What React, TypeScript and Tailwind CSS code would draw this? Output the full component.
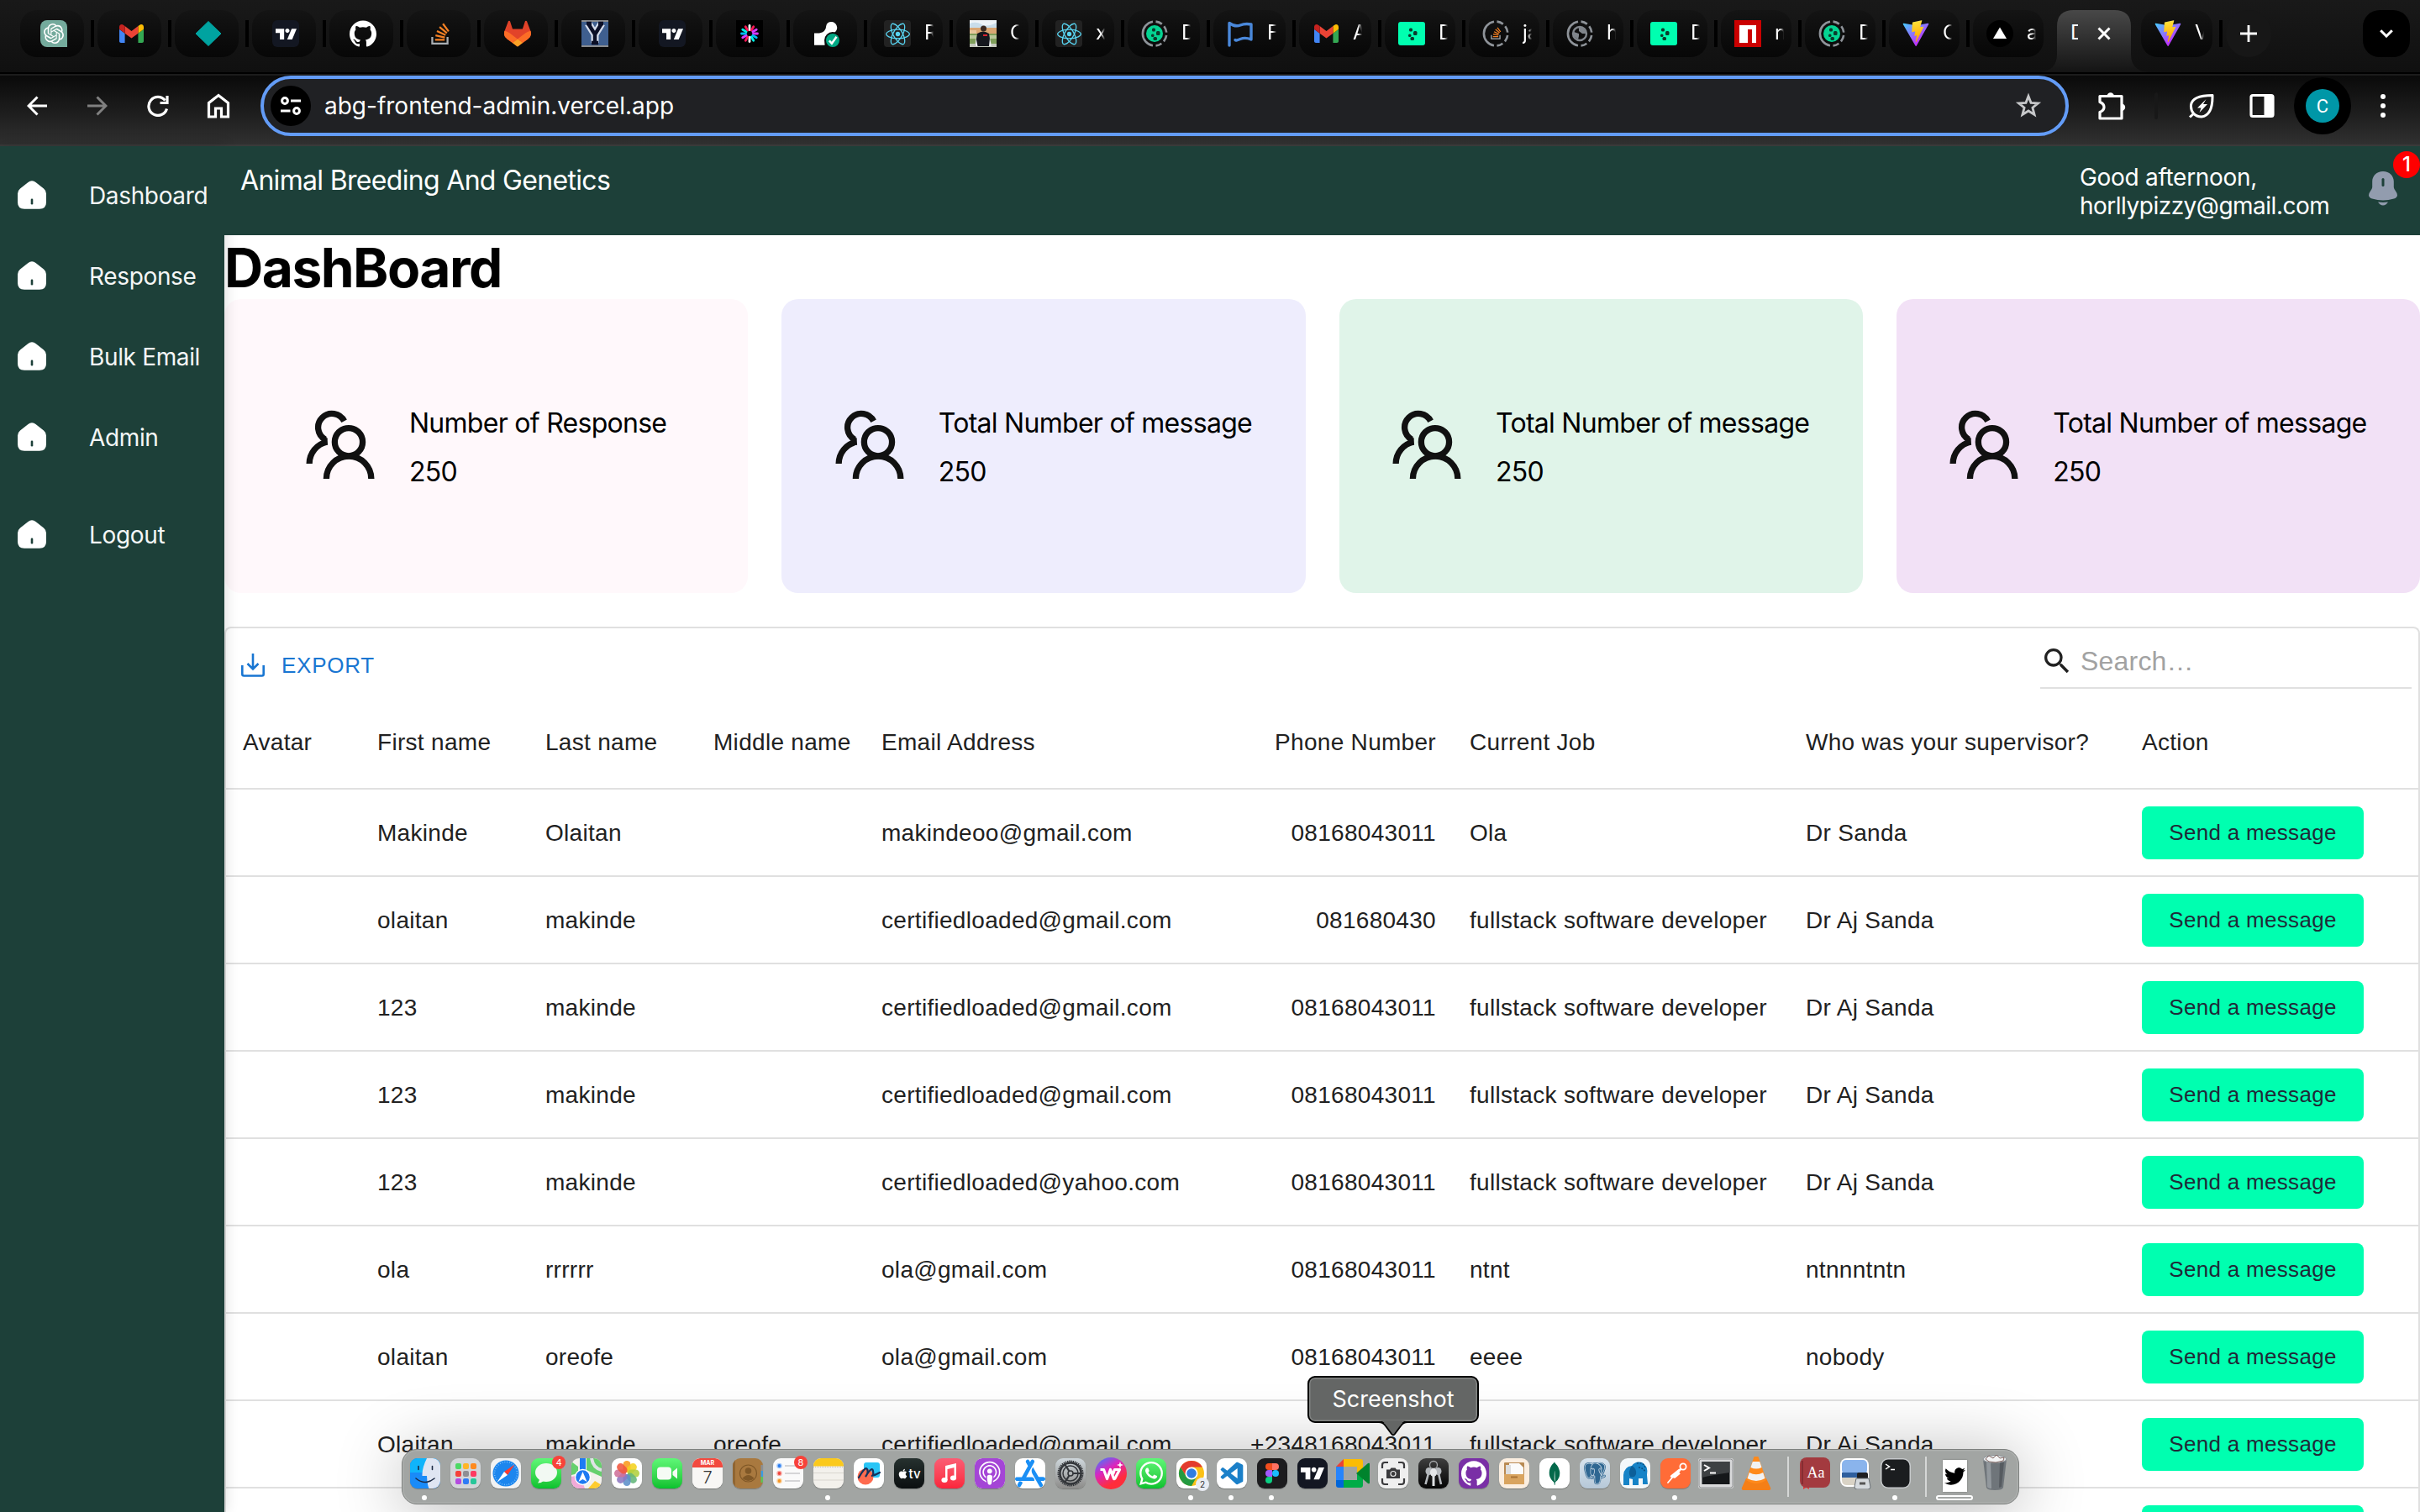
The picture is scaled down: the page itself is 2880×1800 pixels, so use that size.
import React from "react";
import type { ReactNode } from "react";
import { SiOpenai, SiTradingview, SiGithub, SiReact, SiMongodb, SiAppstore, SiWhatsapp, SiApplepodcasts } from "react-icons/si";
import { FaTwitter, FaApple } from "react-icons/fa";
import { MdSearch } from "react-icons/md";
import { BiLogoVisualStudio, BiLogoPostgresql } from "react-icons/bi";

/* ---------- favicons ---------- */

const Gmail = () => (
  <svg viewBox="52 42 88 66" className="h-[22px] w-[29px]">
    <path fill="#4285f4" d="M58 108h14V74L52 59v43c0 3.32 2.69 6 6 6" />
    <path fill="#34a853" d="M120 108h14c3.32 0 6-2.69 6-6V59l-20 15" />
    <path fill="#fbbc04" d="M120 48v26l20-15v-8c0-7.42-8.47-11.65-14.4-7.2" />
    <path fill="#ea4335" d="M72 74V48l24 18 24-18v26L96 92" />
    <path fill="#c5221f" d="M52 51v8l20 15V48l-5.6-4.2c-5.94-4.45-14.4-.22-14.4 7.2" />
  </svg>
);

const StackShape = () => (
  <>
    <path d="M84.4 93.8V70.6h7.7v30.9H22.6V70.6h7.7v23.2z" fill="#a9aeb3" />
    <path
      d="M38.8 68.4l37.8 7.9 1.6-7.6-37.8-7.9-1.6 7.6zm5-18l35 16.3 3.2-7-35-16.4-3.2 7.1zm9.7-17.2l29.7 24.7 4.9-5.9-29.7-24.7-4.9 5.9zm19.2-18.3l-6.2 4.6 23 31 6.2-4.6-23-31zM38 86h38.6v-7.7H38V86z"
      fill="#f48024"
    />
  </>
);

const StackOverflow = () => (
  <svg viewBox="8 6 102 102" className="size-[30px]">
    <StackShape />
  </svg>
);

const GitLab = () => (
  <svg viewBox="0 0 25 24" className="size-8">
    <path fill="#E24329" d="m24.507 9.5-.034-.09L21.082.562a.896.896 0 0 0-1.694.091l-2.29 7.01H7.825L5.535.653a.898.898 0 0 0-1.694-.09L.451 9.411.416 9.5a6.297 6.297 0 0 0 2.09 7.278l.012.01.03.022 5.16 3.867 2.56 1.935 1.554 1.176a1.051 1.051 0 0 0 1.268 0l1.555-1.176 2.56-1.935 5.197-3.89.014-.01A6.297 6.297 0 0 0 24.507 9.5Z" />
    <path fill="#FC6D26" d="m24.507 9.5-.034-.09a11.44 11.44 0 0 0-4.56 2.051l-7.447 5.632 4.742 3.584 5.197-3.89.014-.01A6.297 6.297 0 0 0 24.507 9.5Z" />
    <path fill="#FCA326" d="m7.707 20.677 2.56 1.935 1.555 1.176a1.051 1.051 0 0 0 1.268 0l1.555-1.176 2.56-1.935-4.743-3.584-4.755 3.584Z" />
    <path fill="#FC6D26" d="M5.01 11.461a11.43 11.43 0 0 0-4.56-2.05L.416 9.5a6.297 6.297 0 0 0 2.09 7.278l.012.01.03.022 5.16 3.867 4.745-3.584-7.444-5.632Z" />
  </svg>
);

const TradingTile = () => (
  <span className="flex size-8 items-center justify-center rounded-md bg-[#131722]">
    <SiTradingview className="size-[25px] text-white" />
  </span>
);

const YTile = () => (
  <svg viewBox="0 0 32 32" className="size-8">
    <rect width="32" height="32" fill="#8b8d90" />
    <rect y="2" width="32" height="28" fill="#3f5f8f" />
    <path d="M8 4l8 13 8-13M16 16v11" fill="none" stroke="#d4dceb" strokeWidth="9" />
    <path d="M6 4h6M20 4h6M8 4l8 13 8-13M16 16v10M12 27h8" fill="none" stroke="#0b0f26" strokeWidth="4.4" />
  </svg>
);

const BURST = [
  { a: 0, c: "#ffffff" },
  { a: 30, c: "#ff1654" },
  { a: 60, c: "#d63aff" },
  { a: 90, c: "#d63aff" },
  { a: 120, c: "#00b9f1" },
  { a: 150, c: "#00f2e6" },
  { a: 180, c: "#ffffff" },
  { a: 210, c: "#ff1654" },
  { a: 240, c: "#d63aff" },
  { a: 270, c: "#00b9f1" },
  { a: 300, c: "#00f2e6" },
  { a: 330, c: "#ff1654" },
];

const Burst = () => (
  <svg viewBox="0 0 32 32" className="size-8 bg-black">
    {BURST.map((b) => (
      <path key={b.a} d="M16 11.5V6.5" stroke={b.c} strokeWidth="2.8" strokeLinecap="round" transform={`rotate(${b.a} 16 16)`} />
    ))}
  </svg>
);

const Verified = () => (
  <svg viewBox="0 0 32 32" className="size-8">
    <path d="M1 15.500Q4 15.500 7 15.500Q15 14 15.200 7Q16 2 21.500 2A7 7 0 0 1 26.500 13.500Q24 16 17.500 18Q13 22 13.500 29.800H1z" fill="#fff" />
    <circle cx="23" cy="24" r="10" fill="#0b0b0b" />
    <circle cx="23" cy="24" r="8" fill="#00a884" />
    <path d="M18.800 24.300l3.100 3.400 5.600-8" fill="none" stroke="#fff" strokeWidth="2.500" />
  </svg>
);

const ReactTile = () => (
  <span className="flex size-8 items-center justify-center rounded bg-[#222222]">
    <SiReact className="size-[29px] text-[#58d3f0]" />
  </span>
);

const Photo = () => (
  <svg viewBox="0 0 32 32" className="size-8">
    <rect width="32" height="32" fill="#c9ddea" />
    <path d="M0 4Q8 1 14 5T32 3V0H0z" fill="#eef4f8" />
    <rect y="9" width="32" height="8" fill="#d9a673" />
    <rect y="12" width="8" height="4" fill="#e7c69c" />
    <rect y="16" width="32" height="16" fill="#7f9e5a" />
    <rect y="18" width="32" height="4" fill="#b9c79a" />
    <rect y="28" width="32" height="4" fill="#c3c8bb" />
    <path d="M9 16Q16 11 23 16L25.500 31H6.500z" fill="#15171d" />
    <circle cx="16.500" cy="10" r="3.500" fill="#3a2a22" />
    <path d="M7.500 21l-1 10h3zM24 21l2 10h-3z" fill="#eceef0" />
    <path d="M16 17h5v2h-5z" fill="#d8232f" />
  </svg>
);

const Dots = () => (
  <g fill="#0b3b2c">
    <rect x="13" y="9.500" width="4" height="4" rx="1.500" />
    <rect x="18" y="13" width="4.500" height="5" rx="1.500" />
    <rect x="12" y="16.500" width="3.500" height="3.500" rx="1.500" />
    <rect x="14.500" y="20" width="4.500" height="4" rx="1.500" />
  </g>
);

const GreenTile = () => (
  <svg viewBox="0 0 32 32" className="size-8">
    <rect y="2" width="32" height="28" rx="3" fill="#00ffb0" />
    <Dots />
  </svg>
);

const Ring = ({ children }: { children: ReactNode }) => (
  <svg viewBox="0 0 32 32" className="size-8">
    <path d="M14 1.700A14.500 14.500 0 0 0 14 30.300" fill="none" stroke="#8e9399" strokeWidth="2.600" />
    <path d="M17.500 1.600A14.500 14.500 0 0 1 17.500 30.400" fill="none" stroke="#8e9399" strokeWidth="2.600" strokeDasharray="8 3.500" />
    {children}
  </svg>
);

const RingGreen = () => (
  <Ring>
    <circle cx="16" cy="16" r="10" fill="#04d492" />
    <Dots />
  </Ring>
);

const RingStack = () => (
  <Ring>
    <g transform="translate(6.500 6) scale(.165)">
      <StackShape />
    </g>
  </Ring>
);

const RingGlobe = () => (
  <Ring>
    <circle cx="16" cy="16" r="8" fill="none" stroke="#80858b" strokeWidth="2.400" />
    <path d="M9 14l6 2v3l-1 4-5-4zM15 9h4l4 4v3h-4l-4-3z" fill="#80858b" />
  </Ring>
);

const Flag = () => (
  <svg viewBox="0 0 32 32" className="size-8">
    <path d="M3 30V3.500Q10 8.500 16 6T29 5V23Q22 20 16 22.500T10 23.500" fill="none" stroke="#4a88da" strokeWidth="3.400" strokeLinejoin="round" strokeLinecap="round" />
  </svg>
);

const Npm = () => (
  <svg viewBox="0 0 32 32" className="size-8">
    <rect width="32" height="32" fill="#cb0000" />
    <path d="M6 6h20v21h-5V11h-5v16H6z" fill="#fff" />
  </svg>
);

const Vite = ({ id }: { id: string }) => (
  <svg viewBox="0 0 410 404" className="size-8">
    <defs>
      <linearGradient id={`${id}a`} x1="6" y1="33" x2="235" y2="344" gradientUnits="userSpaceOnUse">
        <stop stopColor="#41D1FF" />
        <stop offset="1" stopColor="#BD34FE" />
      </linearGradient>
      <linearGradient id={`${id}b`} x1="194" y1="8" x2="236" y2="293" gradientUnits="userSpaceOnUse">
        <stop stopColor="#FFEA83" />
        <stop offset=".083" stopColor="#FFDD35" />
        <stop offset="1" stopColor="#FFA800" />
      </linearGradient>
    </defs>
    <path fill={`url(#${id}a)`} d="M399.641 59.5246L215.643 388.545C211.844 395.338 202.084 395.378 198.228 388.618L10.5817 59.5563C6.38087 52.1896 12.6802 43.2665 21.0281 44.7586L205.223 77.6824C206.398 77.8924 207.601 77.8904 208.776 77.6763L389.119 44.8058C397.439 43.2894 403.768 52.1434 399.641 59.5246Z" />
    <path fill={`url(#${id}b)`} d="M292.965 1.5744L156.801 28.2552C154.563 28.6937 152.906 30.5903 152.771 32.8664L144.395 174.33C144.198 177.662 147.258 180.248 150.51 179.498L188.42 170.749C191.967 169.931 195.172 173.055 194.443 176.622L183.18 231.775C182.422 235.487 185.907 238.661 189.532 237.56L212.947 230.446C216.577 229.344 220.065 232.527 219.297 236.242L201.398 322.875C200.278 328.294 207.486 331.249 210.492 326.603L212.5 323.5L323.454 102.072C325.312 98.3645 322.108 94.137 318.036 94.9228L279.014 102.454C275.347 103.161 272.227 99.746 273.262 96.1583L298.731 7.86689C299.767 4.27314 296.636 0.855181 292.965 1.5744Z" />
  </svg>
);

const Vercel = () => (
  <svg viewBox="0 0 32 32" className="size-8">
    <circle cx="16" cy="16" r="16" fill="#000" />
    <path d="M16 8.500L24 22H8z" fill="#fff" />
  </svg>
);

const OpenAi = () => (
  <span className="flex size-8 items-center justify-center rounded-lg rounded-br-none bg-[#74aa9c]">
    <SiOpenai className="size-6 text-white" />
  </span>
);

const Diamond = () => (
  <svg viewBox="0 0 32 32" className="size-8">
    <path d="M16 1.500L31 16 16 30.500 1 16z" fill="#00a3a0" stroke="#00a3a0" strokeWidth="1" strokeLinejoin="round" />
  </svg>
);

/* ---------- browser chrome ---------- */

const pinned: ReactNode[] = [
  <OpenAi />, <Gmail />, <Diamond />, <TradingTile />, <SiGithub className="size-8 text-white" />, <StackOverflow />,
  <GitLab />, <YTile />, <TradingTile />, <Burst />, <Verified />,
];

const wideTabs: { icon: ReactNode; title: string }[] = [
  { icon: <ReactTile />, title: "R" },
  { icon: <Photo />, title: "C" },
  { icon: <ReactTile />, title: "x" },
  { icon: <RingGreen />, title: "D" },
  { icon: <Flag />, title: "F" },
  { icon: <Gmail />, title: "A" },
];

const tabs: { icon: ReactNode; title: string }[] = [
  { icon: <GreenTile />, title: "D" },
  { icon: <RingStack />, title: "ja" },
  { icon: <RingGlobe />, title: "h" },
  { icon: <GreenTile />, title: "D" },
  { icon: <Npm />, title: "n" },
  { icon: <RingGreen />, title: "D" },
  { icon: <Vite id="v1" />, title: "C" },
];

const pill = "my-3 ml-1 mr-2 flex h-14 flex-1 items-center rounded-[20px] bg-linear-to-b from-[#141414] to-[#070707]";
const bar = "h-8 w-1 bg-black";

const TitleTab = ({ icon, title }: { icon: ReactNode; title: string }) => (
  <div className={pill}>
    <span className="ml-4 flex size-8 shrink-0 items-center justify-center">{icon}</span>
    <span className="-mt-0.5 ml-4 w-[11px] overflow-hidden text-2xl text-white [mask-image:linear-gradient(to_right,#000_55%,transparent)]">{title}</span>
  </div>
);

function TabStrip() {
  return (
    <div className="flex h-[86px] bg-linear-to-b from-[#191919] to-[#101010] pl-5">
      {pinned.map((icon, i) => (
        <div key={i} className="flex h-20 w-[92px] items-center">
          <div className={pill}>
            <span className="ml-6 flex size-8 items-center justify-center">{icon}</span>
          </div>
          <div className={bar} />
        </div>
      ))}
      {wideTabs.map((t, i) => (
        <div key={i} className="flex h-20 w-[102px] items-center">
          <TitleTab {...t} />
          <div className={bar} />
        </div>
      ))}
      {tabs.map((t, i) => (
        <div key={i} className="flex h-20 w-[100px] items-center">
          <TitleTab {...t} />
          <div className={bar} />
        </div>
      ))}
      <div className="flex h-20 w-[100px] items-center pr-1">
        <TitleTab icon={<Vercel />} title="a" />
      </div>
      <div className="relative flex h-[86px] w-[100px]">
        <svg viewBox="0 0 132 76" preserveAspectRatio="none" className="absolute -left-4 top-3 h-[74px] w-[132px]">
          <defs>
            <linearGradient id="activeTab" x1="0" y1="0" x2="0" y2="1">
              <stop stopColor="#484848" />
              <stop offset="1" stopColor="#141414" />
            </linearGradient>
          </defs>
          <path d="M0 76Q20 74 20 54V20Q20 0 40 0H88Q108 0 108 20V54Q108 74 128 76z" fill="url(#activeTab)" />
        </svg>
        <div className="relative flex h-20 items-center pl-5 text-2xl text-white">
          <span className="-mt-0.5 w-[9px] overflow-hidden">D</span>
          <svg viewBox="0 0 16 16" className="ml-[23px] size-4">
            <path d="M1.500 1.500l13 13M14.500 1.500l-13 13" stroke="#fff" strokeWidth="3" />
          </svg>
        </div>
      </div>
      <div className="flex h-20 w-[101px] items-center">
        <TitleTab icon={<Vite id="v2" />} title="V" />
        <div className={bar} />
      </div>
      <div className="ml-1 mt-3 flex h-14 w-[54px] items-center justify-center rounded-full bg-[#171717]">
        <svg viewBox="0 0 20 20" className="size-5">
          <path d="M10 0v20M0 10h20" stroke="#fff" strokeWidth="2.800" />
        </svg>
      </div>
      <div className="ml-auto mr-3 mt-3 flex size-14 items-center justify-center rounded-[20px] bg-black">
        <svg viewBox="0 0 16 10" className="h-2.5 w-4">
          <path d="M1.200 1.200L8 8l6.800-6.800" fill="none" stroke="#fff" strokeWidth="3" />
        </svg>
      </div>
    </div>
  );
}

const cell = "flex h-[72px] w-[72px] items-center justify-center";

function Toolbar() {
  return (
    <div className="flex h-[86px] items-start border-b-2 border-[#3a3a3a] border-t-2 border-t-[#1c1c1c] bg-linear-to-b from-[#0a0a0a] to-[#303030] pl-2">
      <div className={cell}>
        <svg viewBox="0 0 24 24" className="size-6" fill="none" stroke="#fff" strokeWidth="3">
          <path d="M24 12H2.500M12.500 1.500L2 12l10.500 10.500" />
        </svg>
      </div>
      <div className={cell}>
        <svg viewBox="0 0 24 24" className="size-6" fill="none" stroke="#808080" strokeWidth="3">
          <path d="M0 12h21.500M11.500 1.500L22 12 11.500 22.500" />
        </svg>
      </div>
      <div className={cell}>
        <svg viewBox="0 0 26 26" className="size-[26px]" fill="none" stroke="#fff" strokeWidth="3.200">
          <path d="M23.500 16.500A11 11 0 1 1 21.500 6.500" />
          <path d="M24 1v8.500h-8.500" />
        </svg>
      </div>
      <div className={cell}>
        <svg viewBox="0 0 28 30" className="h-[30px] w-7" fill="none" stroke="#fff" strokeWidth="3.200">
          <path d="M2.500 28V11.500L14 2.500l11.500 9V28H17.500V18h-7v10z" />
        </svg>
      </div>
      <div className="ml-3.5 flex h-[72px] w-[2152px] items-center rounded-full border-4 border-[#639cf7] bg-[#202124] pl-2 pr-[28px]">
        <span className="flex size-12 items-center justify-center rounded-full bg-black">
          <svg viewBox="0 0 24 24" className="size-6" fill="none" stroke="#fff" strokeWidth="3">
            <circle cx="5" cy="6" r="3.400" />
            <path d="M12 6h12M0 18h11.500" />
            <circle cx="19" cy="18" r="3.400" />
          </svg>
        </span>
        <span className="ml-4 text-[28px] leading-none text-white">abg-frontend-admin.vercel.app</span>
        <svg viewBox="0 0 32 32" className="ml-auto size-8" fill="none" stroke="#c7c8ca" strokeWidth="2.800">
          <path d="M16 4.500l3 7.800 8.500.6-6.600 5.300 2.200 8.300L16 22l-7.100 4.500 2.200-8.300L4.500 12.900l8.500-.6z" />
        </svg>
      </div>
      <div className={`ml-4 ${cell}`}>
        <svg viewBox="0 0 34 34" className="size-[34px]" fill="none" stroke="#fff" strokeWidth="3.200">
          <path d="M2 5.500h26V32H2V24.500Q7 22.500 7 18.500T2 12.500z" strokeLinejoin="round" />
          <path d="M10.500 5.500a4.200 4.200 0 0 1 8.400 0zM28 14.500a4.200 4.200 0 0 1 0 8.400z" fill="#fff" stroke="none" />
        </svg>
      </div>
      <div className="ml-3.5 mt-5 h-8 w-1 rounded-full bg-[#181818]" />
      <div className={`ml-4 ${cell}`}>
        <svg viewBox="0 0 30 30" className="size-[30px]" fill="none" stroke="#fff" strokeWidth="3">
          <path d="M2.500 14Q4 2.500 28 2.500Q28.500 26 15 28Q9 28 5.500 24Q2 20 2.500 14zM6 24l-5 4.500" strokeLinejoin="round" />
          <path d="M20.500 7L10 17.500h4.500L12.500 23 22 13h-5z" fill="#fff" stroke="none" />
        </svg>
      </div>
      <div className={cell}>
        <svg viewBox="0 0 30 30" className="size-[30px]">
          <rect x="2" y="2.500" width="26" height="25" rx="2" fill="none" stroke="#fff" strokeWidth="3.200" />
          <path d="M17.500 2H27v26h-9.500z" fill="#fff" />
        </svg>
      </div>
      <div className={cell}>
        <span className="flex size-[68px] items-center justify-center rounded-full bg-black">
          <span className="flex size-10 items-center justify-center rounded-full bg-[#0097a7] font-[Roboto] text-[22px] text-white">C</span>
        </span>
      </div>
      <div className={`${cell} flex-col gap-[5px]`}>
        <i className="size-1.5 rounded-full bg-white" />
        <i className="size-1.5 rounded-full bg-white" />
        <i className="size-1.5 rounded-full bg-white" />
      </div>
    </div>
  );
}

/* ---------- page ---------- */

const HomeIcon = () => (
  <svg viewBox="0 0 34 34" className="size-[34px]">
    <path d="M17 .3Q19.500 .3 21.500 2L31 9.500Q34 12 34 15.500V26Q34 33.700 26 33.700H8Q0 33.700 0 26V15.500Q0 12 3 9.500L12.500 2Q14.500 .3 17 .3z" fill="#fff" />
    <rect x="15.700" y="21.500" width="2.600" height="7" rx="1.300" fill="#1d4039" />
  </svg>
);

const NavItem = ({ label, className = "" }: { label: string; className?: string }) => (
  <li className={`flex h-24 items-center pl-[21px] ${className}`}>
    <HomeIcon />
    <span className="ml-[51px] mt-0.5 whitespace-nowrap text-[28px] leading-none tracking-[-0.35px] text-[#f4f6f6]">{label}</span>
  </li>
);

const PeopleIcon = () => (
  <svg viewBox="76 50 244 247" className="-mt-[5px] h-[82px] w-[82px] shrink-0" fill="none" stroke="#111" strokeWidth="22">
    <path d="M212 90A49.500 49.500 0 1 0 144 156" />
    <path d="M87 243A80.500 80.500 0 0 1 151 164.500" />
    <path d="M139 147L152 151V176L139 170z" fill="#111" stroke="none" />
    <circle cx="228" cy="165" r="50" />
    <path d="M148 297A80.500 81 0 0 1 309 297" />
  </svg>
);

const Card = ({ title, className }: { title: string; className: string }) => (
  <div className={`flex h-[350px] items-center justify-center rounded-[20px] ${className}`}>
    <PeopleIcon />
    <div className="ml-[41px] mt-[3px] text-[32px] leading-[58px] tracking-[-0.72px] text-black">
      <p>{title}</p>
      <p>250</p>
    </div>
  </div>
);

type Row = { first: string; last: string; middle?: string; email: string; phone: string; job: string; sup: string };

const rows: Row[] = [
  { first: "Makinde", last: "Olaitan", email: "makindeoo@gmail.com", phone: "08168043011", job: "Ola", sup: "Dr Sanda" },
  { first: "olaitan", last: "makinde", email: "certifiedloaded@gmail.com", phone: "081680430", job: "fullstack software developer", sup: "Dr Aj Sanda" },
  { first: "123", last: "makinde", email: "certifiedloaded@gmail.com", phone: "08168043011", job: "fullstack software developer", sup: "Dr Aj Sanda" },
  { first: "123", last: "makinde", email: "certifiedloaded@gmail.com", phone: "08168043011", job: "fullstack software developer", sup: "Dr Aj Sanda" },
  { first: "123", last: "makinde", email: "certifiedloaded@yahoo.com", phone: "08168043011", job: "fullstack software developer", sup: "Dr Aj Sanda" },
  { first: "ola", last: "rrrrrr", email: "ola@gmail.com", phone: "08168043011", job: "ntnt", sup: "ntnnntntn" },
  { first: "olaitan", last: "oreofe", email: "ola@gmail.com", phone: "08168043011", job: "eeee", sup: "nobody" },
  { first: "Olaitan", last: "makinde", middle: "oreofe", email: "certifiedloaded@gmail.com", phone: "+2348168043011", job: "fullstack software developer", sup: "Dr Aj Sanda" },
  { first: "", last: "", email: "", phone: "", job: "", sup: "" },
];

const grid = "grid grid-cols-[160px_200px_200px_200px_400px_300px_400px_400px_1fr] items-center whitespace-nowrap border-b-2 border-[#e0e0e0] *:px-5";

function DataTable() {
  return (
    <section className="mt-10 rounded-t-lg border-2 border-b-0 border-[#e0e0e0] font-['Liberation_Sans',Arial,sans-serif] text-[28px] tracking-[0.3px] text-[#212121]">
      <div className="flex h-20 items-start justify-between pl-[18px] pr-2">
        <button className="mt-[27px] flex items-center text-[26px] leading-[34px] tracking-[0.75px] text-[#1976d2]">
          <svg viewBox="0 0 28 28" className="size-7" fill="none" stroke="#1976d2" strokeWidth="2.600">
            <path d="M1.300 14v10.500Q1.300 26.500 3.300 26.500H24.700Q26.700 26.500 26.700 24.500V14" />
            <path d="M14 0v17M7.500 12L14 18.500 20.500 12" />
          </svg>
          <span className="ml-5">EXPORT</span>
        </button>
        <label className="mt-[6px] flex h-[66px] w-[442px] items-center border-b-2 border-[#e0e0e0] pt-0.5 text-[32px] tracking-normal text-[#a2a2a2]">
          <MdSearch className="size-10 text-[#212121]" />
          <span className="ml-2 tracking-[0.2px]">Search…</span>
        </label>
      </div>
      <div className={`${grid} h-28 pt-0.5`}>
        <div>Avatar</div>
        <div>First name</div>
        <div>Last name</div>
        <div>Middle name</div>
        <div>Email Address</div>
        <div className="text-right">Phone Number</div>
        <div>Current Job</div>
        <div>Who was your supervisor?</div>
        <div>Action</div>
      </div>
      {rows.map((r, i) => (
        <div key={i} className={`${grid} h-[104px] pt-0.5`}>
          <div />
          <div>{r.first}</div>
          <div>{r.last}</div>
          <div>{r.middle}</div>
          <div>{r.email}</div>
          <div className="text-right">{r.phone}</div>
          <div>{r.job}</div>
          <div>{r.sup}</div>
          <div>
            <button className="-mt-0.5 block h-[63px] w-[264px] rounded-lg bg-[#00ffb0] text-[26px] text-[#1f2a37]">Send a message</button>
          </div>
        </div>
      ))}
    </section>
  );
}

function Page() {
  return (
    <div className="flex h-[1626px] bg-white">
      <aside className="relative z-10 w-[267px] shrink-0 bg-[#1d4039] pt-2.5 shadow-[0_0_16px_rgba(0,0,0,0.16)]">
        <ul>
          <NavItem label="Dashboard" />
          <NavItem label="Response" />
          <NavItem label="Bulk Email" />
          <NavItem label="Admin" />
          <NavItem label="Logout" className="mt-5" />
        </ul>
      </aside>
      <div className="min-w-0 flex-1">
        <header className="relative z-20 flex h-[106px] bg-[#1d4039] text-white">
          <h2 className="ml-[19px] mt-[21px] text-[32px] leading-[39px] tracking-[-0.68px]">Animal Breeding And Genetics</h2>
          <div className="ml-auto mr-[49px] mt-[21px] w-[295px] text-[28px] leading-[33.5px]">
            <p className="tracking-[-0.3px]">Good afternoon,</p>
            <p className="tracking-[-0.5px]">horllypizzy@gmail.com</p>
          </div>
          <div className="relative mt-[30px] h-[41px] w-[61px]">
            <svg viewBox="0 0 34 41" className="h-[41px] w-[34px]">
              <path d="M17 0C24.500 0 29.800 5.500 29.800 12V19Q30 21 32 23.500Q34 26 34 28.500Q33.500 31.500 30 32.500Q17 36.500 4 32.500Q.5 31.500 0 28.500Q0 26 2 23.500Q4 21 4.200 19V12C4.200 5.500 9.500 0 17 0z" fill="#929cae" />
              <path d="M11 36.600Q17 37.300 23 36.600Q20.500 40.600 17 40.600T11 36.600z" fill="#929cae" />
              <rect x="15.500" y="8" width="3" height="10" rx="1.500" fill="#1d4039" />
            </svg>
            <span className="absolute -top-6 left-[29px] flex size-8 items-center justify-center rounded-full bg-[#ff0000] text-2xl font-medium text-white">1</span>
          </div>
        </header>
        <main>
          <h1 className="h-[76px] pt-px text-[64px] font-bold leading-[76px] tracking-[-1.5px] text-black">DashBoard</h1>
          <div className="grid grid-cols-4 gap-10">
            <Card title="Number of Response" className="bg-[#fff8fb]" />
            <Card title="Total Number of message" className="bg-[#eeedfd]" />
            <Card title="Total Number of message" className="bg-[#e0f4e9]" />
            <Card title="Total Number of message" className="bg-[#f2e1f6]" />
          </div>
          <DataTable />
        </main>
      </div>
    </div>
  );
}

/* ---------- dock ---------- */

const tile = "relative flex size-9 items-center justify-center overflow-hidden rounded-[9px] shadow-[0_1px_1px_rgba(0,0,0,0.25)]";
const full = "size-9";

const Finder = () => (
  <svg viewBox="0 0 36 36" className={full}>
    <rect width="36" height="36" fill="#1a8bf8" />
    <rect width="36" height="17" fill="#10b4fb" />
    <path d="M20 0Q14 12 14.500 21H20Q20 30 22.500 36H36V0z" fill="#dfe5f2" />
    <path d="M10 9.500v4M26.500 9.500v4M7 24Q18 33 29 24" fill="none" stroke="#1c2a44" strokeWidth="1.600" strokeLinecap="round" />
  </svg>
);

const LAUNCH = ["#4cd964", "#ffb526", "#ff8a1e", "#f5413b", "#8e8e93", "#ff3b62", "#b44be0", "#2f7bf6", "#27c79a"];
const Launchpad = () => (
  <div className="grid grid-cols-3 gap-[2px]">
    {LAUNCH.map((c) => (
      <span key={c} className="size-[7px] rounded-[2px]" style={{ backgroundColor: c }} />
    ))}
  </div>
);

const Safari = () => (
  <svg viewBox="0 0 36 36" className={full}>
    <circle cx="18" cy="18" r="15.500" fill="#1c86ee" />
    <circle cx="18" cy="18" r="13.500" fill="none" stroke="#8cc8fa" strokeWidth="1.500" strokeDasharray=".8 2" />
    <path d="M28.500 7.500L20 20l-4-4z" fill="#ff3b30" />
    <path d="M7.500 28.500L16 16l4 4z" fill="#fff" />
  </svg>
);

const Messages = () => (
  <svg viewBox="0 0 36 36" className={full}>
    <ellipse cx="18" cy="17" rx="13" ry="11" fill="#f2f9f3" />
    <path d="M10 24q0 4-2 5.500Q12 29.500 15 27z" fill="#f2f9f3" />
  </svg>
);

const Maps = () => (
  <svg viewBox="0 0 36 36" className={full}>
    <rect width="36" height="36" fill="#f3f1ec" />
    <path d="M18 0h18v22L18 14z" fill="#66d06d" />
    <path d="M0 4l8 6v8L0 20z" fill="#66d06d" />
    <path d="M0 22l10-2 6 16H0z" fill="#f2a9d8" />
    <path d="M20 36l8-9 8 5v4z" fill="#ffcc2f" />
    <path d="M24 0q2 12 12 14" fill="none" stroke="#dfe3e6" strokeWidth="4" />
    <path d="M10 0h7v16h-7z" fill="#1e7bf2" />
    <circle cx="13.500" cy="22.500" r="9" fill="#1e7bf2" stroke="#fff" strokeWidth="1.400" />
    <path d="M13.500 16l5 12-5-3-5 3z" fill="#fff" />
  </svg>
);

const PETALS = ["#f99a1c", "#f4d21f", "#b0cf3d", "#63b67a", "#5d8fc9", "#8d78c0", "#cf6f9a", "#f0553e"];
const Photos = () => (
  <svg viewBox="0 0 36 36" className={full}>
    {PETALS.map((c, i) => (
      <rect key={c} x="13.500" y="3" width="9" height="14" rx="4.500" fill={c} fillOpacity=".88" transform={`rotate(${i * 45} 18 18)`} />
    ))}
  </svg>
);

const FaceTime = () => (
  <svg viewBox="0 0 36 36" className={full}>
    <rect x="6" y="10.500" width="17" height="15" rx="4" fill="#f5fbf5" />
    <path d="M24.500 16l5.500-4.500v13L24.500 20z" fill="#f5fbf5" />
  </svg>
);

const CalendarIcon = () => (
  <div className="flex size-9 flex-col items-center bg-[#f8f7f5]">
    <span className="flex h-[11px] w-full items-center justify-center bg-[#f24a3f] text-[7px] font-bold leading-none text-white">MAR</span>
    <span className="text-[20px] font-light leading-[24px] text-[#333]">7</span>
  </div>
);

const Contacts = () => (
  <svg viewBox="0 0 36 36" className={full}>
    <rect width="36" height="36" fill="#a9793f" />
    <path d="M33.500 8h2.500v7h-2.500z" fill="#8b8f94" />
    <path d="M33.500 15h2.500v7h-2.500z" fill="#3b9be0" />
    <path d="M33.500 22h2.500v7h-2.500z" fill="#5fc35a" />
    <rect width="3" height="36" fill="#8f6532" />
    <circle cx="18.500" cy="18" r="10" fill="none" stroke="#805827" strokeWidth="1.200" />
    <circle cx="18.500" cy="15" r="3.800" fill="#805827" />
    <path d="M11.500 24Q18.500 16 25.500 24Q18.500 30 11.500 24z" fill="#805827" />
  </svg>
);

const Reminders = () => (
  <svg viewBox="0 0 36 36" className={full}>
    <g strokeWidth="1.400">
      <path d="M14 9h18M14 18h18M14 27h18" stroke="#c9c9cc" />
      <circle cx="7.500" cy="9" r="2.600" fill="#2a7cf0" stroke="#a8cbf8" />
      <circle cx="7.500" cy="18" r="2.600" fill="#f0453c" stroke="#f8b3af" />
      <circle cx="7.500" cy="27" r="2.600" fill="#f69523" stroke="#fbd5a5" />
    </g>
  </svg>
);

const Notes = () => (
  <svg viewBox="0 0 36 36" className={full}>
    <rect width="36" height="36" fill="#f3f1ec" />
    <rect width="36" height="9.500" fill="#fbc91b" />
    <path d="M0 17.500h36M0 26h36" stroke="#d9d6cf" strokeWidth="1" />
    <path d="M0 10.500h36" stroke="#b5b1a6" strokeWidth=".8" strokeDasharray="1 1" />
  </svg>
);

const Freeform = () => (
  <svg viewBox="0 0 36 36" className={full}>
    <rect x="12" y="5" width="19" height="18" rx="3" fill="#29c5f6" />
    <circle cx="14" cy="22" r="9.500" fill="#ff6b4f" />
    <path d="M6 23Q14 9 16 13T14 22Q22 9 23 15T21 21Q26 20 31 17" fill="none" stroke="#14335c" strokeWidth="2.200" strokeLinecap="round" />
  </svg>
);

const AppleTv = () => (
  <div className="flex items-center text-white">
    <FaApple className="size-[13px]" />
    <span className="text-[15px] font-medium leading-none">tv</span>
  </div>
);

const Music = () => (
  <svg viewBox="0 0 36 36" className={full}>
    <path d="M13 9l13-3v4.500l-10.500 2.500V26H13z" fill="#fff" />
    <path d="M23.500 8H26v15h-2.500z" fill="#fff" />
    <ellipse cx="12" cy="26" rx="3.600" ry="3" fill="#fff" />
    <ellipse cx="22.500" cy="23.500" rx="3.600" ry="3" fill="#fff" />
  </svg>
);

const Settings = () => (
  <svg viewBox="0 0 36 36" className={full} fill="none" stroke="#33363a">
    <circle cx="18" cy="18" r="14" strokeWidth="3" strokeDasharray="1.400 .8" />
    <circle cx="18" cy="18" r="12.500" strokeWidth="2.400" />
    <circle cx="18" cy="18" r="9" strokeWidth="1.500" />
    <circle cx="18" cy="18" r="3" strokeWidth="1.600" />
    <path d="M16.500 15.500L11 7M21 18h10M16.500 20.500L11 29" strokeWidth="2.200" />
  </svg>
);

const Wps = () => (
  <svg viewBox="0 0 38 38" className="size-[38px]">
    <defs>
      <linearGradient id="wps" x1=".1" y1="0" x2=".7" y2="1">
        <stop stopColor="#3d7dff" />
        <stop offset=".4" stopColor="#d926c0" />
        <stop offset=".8" stopColor="#ff2d3b" />
      </linearGradient>
    </defs>
    <circle cx="19" cy="19" r="19" fill="url(#wps)" />
    <path d="M6.500 14.500H10.500L14.500 25.500 18.500 14.500 22.500 25.500Q24 26 25 23L29.500 14.500H23.500L21.500 20" fill="none" stroke="#fff" strokeWidth="3.200" strokeLinejoin="round" />
    <path d="M30 5l1 3 3 1-3 1-1 3-1-3-3-1 3-1z" fill="#fff" />
  </svg>
);

const Chrome = () => (
  <svg viewBox="0 0 36 36" className={full}>
    <circle cx="18" cy="18" r="15" fill="#fbc116" />
    <path d="M5 10.500A15 15 0 0 0 18 33L24.500 21.500 12 22z" fill="#249a41" />
    <path d="M5 10.500A15 15 0 0 1 31 10.500H18L11.500 21z" fill="#e33b2e" />
    <circle cx="18" cy="18" r="7.500" fill="#fff" />
    <circle cx="18" cy="18" r="5.800" fill="#2f7de1" />
  </svg>
);

const Figma = () => (
  <svg viewBox="0 0 36 36" className={full}>
    <path d="M18 6h-4a4 4 0 0 0 0 8h4z" fill="#f24e1e" />
    <path d="M18 6h4a4 4 0 0 1 0 8h-4z" fill="#ff7262" />
    <path d="M18 14h-4a4 4 0 0 0 0 8h4z" fill="#a259ff" />
    <circle cx="22" cy="18" r="4" fill="#1abcfe" />
    <path d="M18 22h-4a4 4 0 1 0 4 4z" fill="#0acf83" />
  </svg>
);

const Meet = () => (
  <svg viewBox="0 0 40 34" className="h-[34px] w-10">
    <path d="M0 9L9 0v9z" fill="#ea4335" />
    <path d="M9 0h20q3 0 3 3v8l-7 6V9H9z" fill="#fbbc04" />
    <path d="M0 9h9v16H0z" fill="#2684fc" />
    <path d="M0 25h9v9H3q-3 0-3-3z" fill="#0066da" />
    <path d="M9 25h16v-8l7 6v8q0 3-3 3H9z" fill="#00ac47" />
    <path d="M24 17L38 5q2-1 2 1v22q0 2-2 1z" fill="#00832d" />
  </svg>
);

const ScreenshotIcon = () => (
  <svg viewBox="0 0 36 36" className={full} fill="none" stroke="#3a3a3c" strokeWidth="2.200">
    <path d="M5 12V8q0-3 3-3h4M24 5h4q3 0 3 3v4M31 24v4q0 3-3 3h-4M12 31H8q-3 0-3-3v-4" />
    <path d="M10 13.500h4l1.500-2h5l1.500 2h4V24H10z" fill="#3a3a3c" stroke="none" />
    <circle cx="18" cy="18.500" r="3" stroke="#e8e8e8" strokeWidth="1.200" />
  </svg>
);

const Keys = () => (
  <svg viewBox="0 0 36 36" className={full}>
    <circle cx="18" cy="8" r="4.500" fill="none" stroke="#a8aaad" strokeWidth="1.300" />
    <ellipse cx="12.500" cy="15.500" rx="4" ry="4.500" fill="#b5b9bd" />
    <ellipse cx="23.500" cy="15.500" rx="4" ry="4.500" fill="#b5b9bd" />
    <path d="M12 18L8.500 31M24 18l3 13" stroke="#b5b9bd" strokeWidth="2.600" />
    <ellipse cx="18" cy="17" rx="4" ry="5" fill="#e4e6e8" />
    <path d="M18 20v13" stroke="#dcdfe1" strokeWidth="3" />
  </svg>
);

const BoxFile = () => (
  <svg viewBox="0 0 36 36" className={full}>
    <rect x="6" y="5" width="24" height="26" rx="1" fill="#b98a52" />
    <path d="M12 6h12l5 5v10H12z" fill="#fbfbfb" />
    <path d="M8 8h6v12H8z" fill="#dedede" />
    <path d="M6 19h24v12H6z" fill="#d9a45f" />
    <path d="M14 22.500h8" stroke="#a97335" strokeWidth="2" />
  </svg>
);

const Elephant = () => (
  <svg viewBox="0 0 36 36" className={full}>
    <path d="M4 32V20Q5 10 14 9Q18 3 26 5Q34 9 32 20L33 31H27V24H22v8h-7v-7l-4-1v8z" fill="#1683c7" />
    <path d="M14 9Q20 12 19 19Q17 24 12 22Q9 16 14 9z" fill="#0c5f99" />
    <path d="M20 6q7-2 10 5M22 11q5 0 8 5" fill="none" stroke="#0b4f80" strokeWidth="1.500" strokeDasharray="2 1.500" />
  </svg>
);

const PostmanIcon = () => (
  <svg viewBox="0 0 36 36" className={full}>
    <circle cx="27" cy="10" r="3.600" fill="none" stroke="#fff" strokeWidth="1.800" />
    <path d="M24.500 12.500l-8 9.500M23 13.500l-10 8 4 1 6-5" fill="none" stroke="#fff" strokeWidth="2.400" strokeLinejoin="round" />
    <path d="M15 22l-6 7" stroke="#fff" strokeWidth="1.800" strokeLinecap="round" />
  </svg>
);

const Console = () => (
  <svg viewBox="0 0 42 36" className="h-9 w-[42px]">
    <rect width="42" height="36" rx="3" fill="#d9dadb" />
    <rect x="1" y="1" width="40" height="34" rx="2.500" fill="none" stroke="#8a8c8e" strokeWidth="1" />
    <rect x="4.500" y="4" width="33" height="27" fill="#15181a" />
    <path d="M4.500 4h33v13q-16 2-33 6z" fill="#3d4143" />
    <path d="M7 8l6 3.500L7 15M14 17.500h7" fill="none" stroke="#fff" strokeWidth="2" />
  </svg>
);

const Vlc = () => (
  <svg viewBox="0 0 38 40" className="h-10 w-[38px]">
    <path d="M7 26h24l5 11q1 3-2 3H4q-3 0-2-3z" fill="#f57f17" />
    <path d="M16.500 0h5L31 28q-12 8-24 0z" fill="#ff8a1c" />
    <path d="M14.800 6h8.400l2.400 7q-6.600 3-13.200 0z" fill="#f1f2f4" />
    <path d="M10.800 19q8.200 4.500 16.400 0l2.300 7q-10.500 6-21 0z" fill="#f1f2f4" />
  </svg>
);

const Dictionary = () => (
  <svg viewBox="0 0 36 38" className="h-[38px] w-9">
    <path d="M4 32h7v6l-3.500-2L4 38z" fill="#e23b3b" />
    <rect width="36" height="36" rx="8" fill="#a33a3f" />
    <path d="M3 4v28" stroke="#7c2a2f" strokeWidth="1.500" />
    <text x="19" y="24" textAnchor="middle" fontFamily="Liberation Serif" fontSize="18" fill="#fff">Aa</text>
  </svg>
);

const Preview = () => (
  <svg viewBox="0 0 38 38" className="size-[38px]">
    <rect x="1" y="1" width="34" height="34" rx="8" fill="#fff" />
    <rect x="3" y="3" width="30" height="17" rx="5" fill="#8ab4ec" />
    <rect x="3" y="18" width="30" height="6" fill="#2f5f9e" />
    <path d="M3 24h30v3q0 6-6 6H9q-6 0-6-6z" fill="#d9d3c6" />
    <rect x="21" y="18" width="13" height="8" rx="2" fill="#1e1f22" />
    <path d="M20 25h15l2 10q0 3-3 3H21q-3 0-3-3z" fill="#d5dade" stroke="#6a7076" strokeWidth="1" />
    <path d="M24 31h7" stroke="#555" strokeWidth="3" />
  </svg>
);

const TerminalIcon = () => (
  <svg viewBox="0 0 36 36" className={full}>
    <rect width="36" height="36" rx="9" fill="#c6c9cb" />
    <rect x="1.500" y="1.500" width="33" height="33" rx="7.500" fill="#1b1d1f" />
    <path d="M6 7l4.500 3L6 13M12 13.500h5" fill="none" stroke="#fff" strokeWidth="1.500" />
  </svg>
);

const TwitterFile = () => (
  <span className="mt-[2px] flex h-[38px] w-[29px] items-center justify-center bg-white shadow-[0_0_2px_rgba(0,0,0,0.3)]">
    <FaTwitter className="size-[25px] text-black" />
  </span>
);

const Trash = () => (
  <svg viewBox="0 0 32 42" className="h-[42px] w-8">
    <path d="M2 5h28l-4 34q-1 3-10 3T6 39z" fill="#6f757a" />
    <path d="M6 8h5l1 32q-4 0-5-2z" fill="#92989d" />
    <path d="M22 8h5l-3 30-3 1z" fill="#565b60" />
    <ellipse cx="16" cy="5" rx="14" ry="4.500" fill="#dfe2e4" stroke="#888d91" />
    <path d="M5 5l4-4 5 3 4-4 4 4 5-1-1 4-9 2-8-1z" fill="#f4f5f6" stroke="#6b4a44" strokeWidth=".8" />
  </svg>
);

type DockApp = { name: string; icon: ReactNode; bg?: string; badge?: string; running?: boolean };

const apps: DockApp[] = [
  { name: "finder", icon: <Finder />, bg: "bg-[#1a8bf8]", running: true },
  { name: "launchpad", icon: <Launchpad />, bg: "bg-[#d3d6d9]" },
  { name: "safari", icon: <Safari />, bg: "bg-[#f1f2f3]" },
  { name: "messages", icon: <Messages />, bg: "bg-linear-to-b from-[#5ef777] to-[#05c22d]", badge: "4" },
  { name: "maps", icon: <Maps /> },
  { name: "photos", icon: <Photos />, bg: "bg-white" },
  { name: "facetime", icon: <FaceTime />, bg: "bg-linear-to-b from-[#5ef777] to-[#05c22d]" },
  { name: "calendar", icon: <CalendarIcon />, bg: "bg-white" },
  { name: "contacts", icon: <Contacts /> },
  { name: "reminders", icon: <Reminders />, bg: "bg-[#fafafa]", badge: "8" },
  { name: "notes", icon: <Notes />, running: true },
  { name: "freeform", icon: <Freeform />, bg: "bg-white" },
  { name: "tv", icon: <AppleTv />, bg: "bg-linear-to-b from-[#26312f] to-[#0b0f10]" },
  { name: "music", icon: <Music />, bg: "bg-linear-to-b from-[#fb5c74] to-[#fa233b]" },
  { name: "podcasts", icon: <SiApplepodcasts className="size-9 text-[#a445d6]" />, bg: "bg-white" },
  { name: "appstore", icon: <SiAppstore className="size-9 text-[#1a8ff5]" />, bg: "bg-white" },
  { name: "settings", icon: <Settings />, bg: "bg-linear-to-b from-[#cfd8dd] to-[#8d8c8a]" },
  { name: "wps", icon: <Wps /> },
  { name: "whatsapp", icon: <SiWhatsapp className="size-[28px] text-white" />, bg: "bg-linear-to-b from-[#5ef777] to-[#05c22d]" },
  { name: "chrome", icon: <Chrome />, bg: "bg-white", running: true },
  { name: "vscode", icon: <BiLogoVisualStudio className="size-[32px] text-[#1b80c9]" />, bg: "bg-white", running: true },
  { name: "figma", icon: <Figma />, bg: "bg-[#1c1c1e]", running: true },
  { name: "tradingview", icon: <SiTradingview className="size-[28px] text-white" />, bg: "bg-[#131722]" },
  { name: "meet", icon: <Meet /> },
  { name: "screenshot", icon: <ScreenshotIcon />, bg: "bg-[#efefef]" },
  { name: "keychain", icon: <Keys />, bg: "bg-linear-to-b from-[#3f3f3f] to-[#050505]" },
  { name: "github", icon: <SiGithub className="size-[30px] text-white" />, bg: "bg-[#7a2fa6]" },
  { name: "box", icon: <BoxFile />, bg: "bg-[#fbeee0]" },
  { name: "mongodb", icon: <SiMongodb className="size-7 text-[#04694b]" />, bg: "bg-white", running: true },
  { name: "postgres", icon: <BiLogoPostgresql className="size-8 text-[#2f6792]" />, bg: "bg-linear-to-b from-[#d8e4ee] to-[#b6c8d8]" },
  { name: "pgadmin", icon: <Elephant />, bg: "bg-[#f4f8fa]" },
  { name: "postman", icon: <PostmanIcon />, bg: "bg-[#ff6c37]", running: true },
  { name: "console", icon: <Console /> },
  { name: "vlc", icon: <Vlc /> },
];

const bare = new Set(["wps", "meet", "console", "vlc", "dictionary", "preview", "terminal"]);

const extras: DockApp[] = [
  { name: "dictionary", icon: <Dictionary /> },
  { name: "preview", icon: <Preview /> },
  { name: "terminal", icon: <TerminalIcon />, running: true },
];

const DockItem = ({ app }: { app: DockApp }) => (
  <div className="relative flex w-12 flex-col items-center">
    {bare.has(app.name) ? (
      <span className="flex size-9 items-center justify-center *:shrink-0">{app.icon}</span>
    ) : (
      <span className={`${tile} ${app.bg ?? ""}`}>{app.icon}</span>
    )}
    {app.running && <i className="mr-[2px] mt-2 size-1.5 rounded-full bg-white" />}
    {app.badge && (
      <span className="absolute -top-[3px] right-[1px] flex size-4 items-center justify-center rounded-full bg-[#f8423a] text-[11px] leading-none text-white">{app.badge}</span>
    )}
    {app.name === "chrome" && (
      <span className="absolute right-[3px] top-[23px] flex size-4 items-center justify-center rounded-full bg-[#e9edf4] text-[10px] leading-none text-[#333]">2</span>
    )}
  </div>
);

function Dock() {
  return (
    <div className="absolute left-[478px] top-[1725px] z-30 flex h-[66px] w-[1925px] rounded-[18px] border border-[#7d807e] bg-[#a2a5a3] pl-[3px] pt-2.5 shadow-[0_6px_80px_rgba(0,0,0,0.3),inset_0_0_0_1.5px_rgba(255,255,255,0.12)]">
      {apps.map((a) => (
        <DockItem key={a.name} app={a} />
      ))}
      <i className="ml-[13px] mr-[7px] h-12 w-0.5 -translate-y-0.5 bg-[#d5d7d6]" />
      {extras.map((a) => (
        <DockItem key={a.name} app={a} />
      ))}
      <i className="ml-[11px] mr-[9px] h-12 w-0.5 -translate-y-0.5 bg-[#d5d7d6]" />
      <div className="flex w-12 flex-col items-center">
        <span className="flex h-9 items-start justify-center">
          <TwitterFile />
        </span>
        <i className="mt-2 h-1.5 w-11 rounded-sm border-2 border-white" />
      </div>
      <div className="-mt-1 flex w-12 justify-center">
        <Trash />
      </div>
    </div>
  );
}

function Tooltip() {
  return (
    <div className="absolute left-[1556px] top-[1638px] z-40 flex h-[56px] w-[204px] items-center justify-center rounded-[9px] border-2 border-black bg-[#646665] shadow-[inset_0_0_0_1.5px_#838584]">
      <span className="-mt-px text-[27px] leading-none text-white">Screenshot</span>
      <svg viewBox="0 0 36 20" className="absolute left-[82px] top-[50px] h-5 w-9">
        <path d="M0 1Q6 1 9 6L16 16.500Q18 19 20 16.500L27 6Q30 1 36 1" fill="#646665" />
        <path d="M1 3Q6 3 9 7.500L16 17Q18 19.500 20 17L27 7.500Q30 3 35 3" fill="none" stroke="#000" strokeWidth="2" />
      </svg>
    </div>
  );
}

export default function App() {
  return (
    <div className="relative h-[1800px] w-[2880px] overflow-hidden bg-black font-[Inter,sans-serif]">
      <TabStrip />
      <div className="h-0.5 bg-black" />
      <Toolbar />
      <Page />
      <Dock />
      <Tooltip />
    </div>
  );
}
